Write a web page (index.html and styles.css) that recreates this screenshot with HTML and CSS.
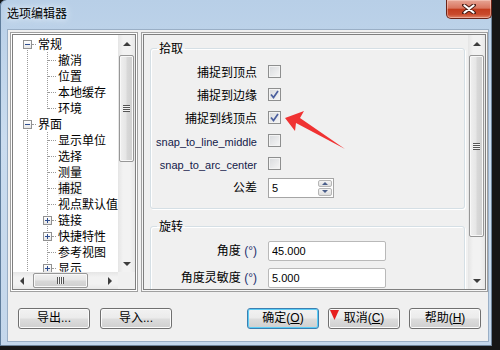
FILE: index.html
```html
<!DOCTYPE html>
<html lang="zh-CN">
<head>
  <meta charset="UTF-8">
  <title>选项编辑器</title>
  <link rel="stylesheet" href="styles.css">
</head>
<body>

<div class="window">
  <div class="titlebar">
    <span class="title">选项编辑器</span>
    <span class="close">
      <svg width="14" height="10" viewBox="0 0 14 10">
        <path d="M2 1 L12 9 M12 1 L2 9" stroke="#4a1c14" stroke-width="4" stroke-linecap="round"/>
        <path d="M2.5 1.5 L11.5 8.5 M11.5 1.5 L2.5 8.5" stroke="#fff" stroke-width="2.2" stroke-linecap="round"/>
      </svg>
    </span>
  </div>

  <div class="client">
    <div class="panes">

      <div class="panel tree-panel">
        <div class="panel-inner tree-grid">
          <div class="tree">
            <div class="row"><span class="node first"><i class="box"></i><i class="dash"></i></span><span class="label">常规</span></div>
            <div class="row"><span class="pipe"></span><span class="node"><i class="dash long"></i></span><span class="label">撤消</span></div>
            <div class="row"><span class="pipe"></span><span class="node"><i class="dash long"></i></span><span class="label">位置</span></div>
            <div class="row"><span class="pipe"></span><span class="node"><i class="dash long"></i></span><span class="label">本地缓存</span></div>
            <div class="row"><span class="pipe"></span><span class="node last"><i class="dash long"></i></span><span class="label">环境</span></div>
            <div class="row"><span class="node"><i class="box"></i><i class="dash"></i></span><span class="label">界面</span></div>
            <div class="row"><span class="pipe"></span><span class="node"><i class="dash long"></i></span><span class="label">显示单位</span></div>
            <div class="row"><span class="pipe"></span><span class="node"><i class="dash long"></i></span><span class="label">选择</span></div>
            <div class="row"><span class="pipe"></span><span class="node"><i class="dash long"></i></span><span class="label">测量</span></div>
            <div class="row"><span class="pipe"></span><span class="node"><i class="dash long"></i></span><span class="label hot">捕捉</span></div>
            <div class="row"><span class="pipe"></span><span class="node"><i class="dash long"></i></span><span class="label">视点默认值</span></div>
            <div class="row"><span class="pipe"></span><span class="node"><i class="box plus"></i><i class="dash"></i></span><span class="label">链接</span></div>
            <div class="row"><span class="pipe"></span><span class="node"><i class="box plus"></i><i class="dash"></i></span><span class="label">快捷特性</span></div>
            <div class="row"><span class="pipe"></span><span class="node"><i class="dash long"></i></span><span class="label">参考视图</span></div>
            <div class="row"><span class="pipe"></span><span class="node"><i class="box plus"></i><i class="dash"></i></span><span class="label">显示</span></div>
          </div>

          <div class="vscroll tree-v">
            <span class="arrow"><i class="tri up"></i></span>
            <span class="thumb"><i class="grip"></i></span>
            <span class="track"></span>
            <span class="arrow"><i class="tri down"></i></span>
          </div>
          <div class="hscroll">
            <span class="arrow"><i class="tri left"></i></span>
            <span class="thumb"><i class="grip"></i></span>
            <span class="track"></span>
            <span class="arrow"><i class="tri right"></i></span>
          </div>
          <div class="corner"></div>
        </div>
      </div>

      <div class="panel opts-panel">
        <div class="panel-inner opts-grid">
          <div class="opts">
            <fieldset class="group">
              <legend>拾取</legend>
              <div class="fields">
                <span class="lbl">捕捉到顶点</span><span class="check"></span>
                <span class="lbl">捕捉到边缘</span><span class="check on"><svg width="11" height="11" viewBox="0 0 11 11"><path d="M2 5.5 L4.5 8.5 L9 2" fill="none" stroke="#4b5f9e" stroke-width="1.7"/></svg></span>
                <span class="lbl">捕捉到线顶点</span><span class="check on"><svg width="11" height="11" viewBox="0 0 11 11"><path d="M2 5.5 L4.5 8.5 L9 2" fill="none" stroke="#4b5f9e" stroke-width="1.7"/></svg></span>
                <span class="lbl latin">snap_to_line_middle</span><span class="check"></span>
                <span class="lbl latin">snap_to_arc_center</span><span class="check"></span>
                <span class="lbl">公差</span>
                <span class="spin">
                  <input class="spin-text" type="text" value="5" readonly>
                  <span class="spin-btns">
                    <span class="spin-btn"><i class="stri up"></i></span>
                    <span class="spin-btn"><i class="stri down"></i></span>
                  </span>
                </span>
              </div>
            </fieldset>

            <fieldset class="group">
              <legend>旋转</legend>
              <div class="fields gap">
                <span class="lbl">角度 <b>(°)</b></span><input class="text" type="text" value="45.000" readonly>
                <span class="lbl">角度灵敏度 <b>(°)</b></span><input class="text" type="text" value="5.000" readonly>
              </div>
            </fieldset>
          </div>

          <div class="vscroll opts-v">
            <span class="arrow"><i class="tri up"></i></span>
            <span class="thumb"><i class="grip"></i></span>
            <span class="track"></span>
            <span class="arrow"><i class="tri down"></i></span>
          </div>
        </div>
      </div>

    </div>

    <div class="buttons">
      <button class="btn">导出...</button>
      <button class="btn">导入...</button>
      <span class="spacer"></span>
      <button class="btn default">确定(<u>O</u>)</button>
      <button class="btn">取消(<u>C</u>)</button>
      <button class="btn">帮助(<u>H</u>)</button>
    </div>
  </div>
</div>

<!-- annotations drawn over the screenshot -->
<svg class="marks" width="500" height="350" viewBox="0 0 500 350">
  <polygon points="285,118 304,111 300,118 345,149 296,123 295,131" fill="#f03232"/>
  <polygon points="330,310 339,310 334.5,320" fill="#e61e1e"/>
</svg>

</body>
</html>
```

FILE: styles.css
```css
body {
  margin: 0;
  width: 500px;
  height: 350px;
  background: #161616;
  font-family: "Liberation Sans", "Noto Sans CJK SC", sans-serif;
  font-size: 12px;
  color: #000;
  overflow: hidden;
}

.window {
  width: 492px;
  height: 346px;
  display: flex;
  flex-direction: column;
  background: linear-gradient(#b8cfe7, #cadcef 40%, #c4d7eb);
  box-shadow: inset 1px 0 0 #5f7d9c, inset -1px -1px 0 #6e849a;
  border-radius: 6px 6px 0 0;
}

.titlebar {
  height: 30px;
  display: flex;
  align-items: flex-start;
}
.title {
  margin: 6px 0 0 7px;
  font-size: 12px;
  line-height: 16px;
  text-shadow: 0 0 5px #e8f1fb, 0 0 8px #e8f1fb;
}
.close {
  margin-left: auto;
  width: 46px;
  height: 19px;
  box-sizing: border-box;
  border: 1px solid #6a2418;
  border-top: none;
  border-radius: 0 0 5px 5px;
  background: linear-gradient(#e7a595, #d9755f 45%, #c33d1f 52%, #c94a2c 80%, #df8468);
  box-shadow: inset 0 0 0 1px rgba(255,220,210,.45);
  display: flex;
  align-items: center;
  justify-content: center;
}

.client {
  flex: 1;
  margin: 0 4px 5px 8px;
  background: #f0f0f0;
  box-shadow: 0 0 0 1px #9aafc6;
  display: flex;
  flex-direction: column;
}

.panes {
  display: flex;
  gap: 3px;
  margin: 2px 0 0 2px;
  height: 260px;
}

.panel {
  border: 1px solid #a0a0a0;
  padding: 1px;
  background: #fff;
}
.panel-inner {
  height: 100%;
  box-sizing: border-box;
  border: 1px solid #7f7f7f;
}
.tree-panel { width: 128px; box-sizing: border-box; }
.opts-panel { width: 347px; box-sizing: border-box; background: #f6f6f6; }

/* tree */
.tree-grid {
  display: grid;
  grid-template-columns: 1fr 17px;
  grid-template-rows: 1fr 17px;
  background: #fff;
}
.tree {
  overflow: hidden;
  padding-top: 1px;
}
.row {
  height: 16px;
  display: flex;
  align-items: center;
  white-space: nowrap;
}
.label {
  margin-left: 1px;
  font-family: "Noto Sans CJK SC", sans-serif;
  font-size: 12px;
  line-height: 16px;
}
.label.hot { background: #f2f2f2; }

.node, .pipe {
  flex: none;
  height: 16px;
  display: flex;
  align-items: center;
  background: repeating-linear-gradient(to bottom, #9a9a9a 0 1px, transparent 1px 2px) 14px 0 / 1px 100% no-repeat;
}
.pipe { width: 20px; }
.node { width: 24px; }
.node.first { background-position: 14px 8px; background-size: 1px 8px; }
.node.last { background-size: 1px 9px; }

.box {
  flex: none;
  margin-left: 10px;
  width: 9px;
  height: 9px;
  box-sizing: border-box;
  border: 1px solid #919191;
  background: linear-gradient(#2e4d8f, #2e4d8f) center / 5px 1px no-repeat, linear-gradient(#fff, #e6e6e6);
}
.box.plus {
  background: linear-gradient(#2e4d8f, #2e4d8f) center / 5px 1px no-repeat,
              linear-gradient(#2e4d8f, #2e4d8f) center / 1px 5px no-repeat,
              linear-gradient(#fff, #e6e6e6);
}
.dash {
  flex: 1;
  height: 0;
  margin-right: 1px;
  border-top: 1px dotted #9a9a9a;
}
.dash.long { margin-left: 15px; }

/* scrollbars */
.vscroll, .hscroll {
  display: flex;
  background: linear-gradient(to right, #e5e5e5, #f2f2f2 30%, #f2f2f2 70%, #e8e8e8);
}
.vscroll { flex-direction: column; }
.hscroll { background: linear-gradient(#e5e5e5, #f2f2f2 30%, #f2f2f2 70%, #e8e8e8); }
.corner { background: #f0f0f0; }
.arrow {
  flex: none;
  width: 17px;
  height: 17px;
  display: flex;
  align-items: center;
  justify-content: center;
}
.hscroll .arrow { height: 17px; }
.track { flex: 1; }
.tri { width: 0; height: 0; border: 4px solid transparent; }
.tri.up { border-bottom-color: #3d3d3d; border-top-width: 0; }
.tri.down { border-top-color: #3d3d3d; border-bottom-width: 0; }
.tri.left { border-right-color: #3d3d3d; border-left-width: 0; }
.tri.right { border-left-color: #3d3d3d; border-right-width: 0; }

.thumb {
  flex: none;
  box-sizing: border-box;
  border: 1px solid #979797;
  border-radius: 2px;
  display: flex;
  align-items: center;
  justify-content: center;
  box-shadow: inset 0 0 0 1px #f8f8f8;
}
.vscroll .thumb {
  margin: 3px 1px 0 1px;
  background: linear-gradient(to right, #f0f0f0, #e6e6e6 45%, #d8d8d8 55%, #cfcfcf);
}
.hscroll .thumb {
  margin: 1px 0 1px 3px;
  width: 55px;
  background: linear-gradient(#f0f0f0, #e6e6e6 45%, #d8d8d8 55%, #cfcfcf);
}
.tree-v .thumb { height: 107px; }
.opts-v .thumb { height: 182px; }

.vscroll .grip {
  width: 7px;
  height: 7px;
  background: repeating-linear-gradient(#555 0 1px, #f4f4f4 1px 2px);
}
.hscroll .grip {
  width: 7px;
  height: 7px;
  background: repeating-linear-gradient(to right, #555 0 1px, #f4f4f4 1px 2px);
}

/* options */
.opts-grid {
  display: flex;
  background: #f0f0f0;
}
.opts {
  flex: 1;
  overflow: hidden;
  padding: 5px 3px 0 6px;
}
.group {
  margin: 0;
  padding: 0 0 9px 0;
  min-width: 0;
  border: 1px solid #d5dfe5;
  border-radius: 3px;
  box-shadow: inset 1px 1px 0 #fff, 1px 1px 0 #fff;
}
.group + .group { margin-top: 9px; }
.group legend {
  margin-left: 6px;
  padding: 0 2px;
  font-family: "Noto Sans CJK SC", sans-serif;
  font-size: 12px;
  line-height: 16px;
}

.fields {
  display: grid;
  grid-template-columns: 106px auto;
  grid-auto-rows: 23px;
  column-gap: 11px;
  align-items: center;
  justify-items: start;
  padding-top: 5px;
}
.fields.gap { row-gap: 4px; }
.lbl {
  justify-self: end;
  white-space: nowrap;
  font-size: 12px;
  line-height: 16px;
}
.lbl b { font-weight: normal; color: #1d2f6e; }
.lbl.latin {
  font-size: 11px;
  color: #14204a;
}

.check {
  width: 13px;
  height: 13px;
  box-sizing: border-box;
  margin-bottom: 2px;
  border: 1px solid #8e8f8f;
  background: linear-gradient(135deg, #d8dadd, #f6f6f6);
  box-shadow: inset 0 0 0 1px #f3f3f3;
  display: flex;
  align-items: center;
  justify-content: center;
}

.spin {
  width: 66px;
  height: 20px;
  box-sizing: border-box;
  border: 1px solid #a5a5a5;
  background: #fff;
  display: flex;
}
.spin-text, .text {
  font-family: "Liberation Sans", sans-serif;
  font-size: 11px;
  color: #000;
  padding: 0 0 0 3px;
  outline: none;
}
.spin-text {
  flex: 1;
  min-width: 0;
  border: none;
  background: transparent;
}
.spin-btns {
  width: 14px;
  display: flex;
  flex-direction: column;
  gap: 1px;
  padding: 1px 1px 1px 0;
}
.spin-btn {
  flex: 1;
  border: 1px solid #b6b6b6;
  border-radius: 2px;
  background: linear-gradient(#f4f4f4, #dedede);
  display: flex;
  align-items: center;
  justify-content: center;
}
.stri { width: 0; height: 0; border: 3px solid transparent; }
.stri.up { border-bottom-color: #4a5e8a; border-top-width: 0; }
.stri.down { border-top-color: #4a5e8a; border-bottom-width: 0; }

.text {
  width: 118px;
  height: 20px;
  box-sizing: border-box;
  border: 1px solid #b9b9b9;
  border-radius: 2px;
  background: #fff;
}

/* buttons */
.buttons {
  display: flex;
  gap: 10px;
  margin: 16px 7px 0 10px;
}
.spacer { flex: 1; }
.btn + .btn + .spacer + .btn,
.spacer ~ .btn { margin-left: -1px; }
.btn {
  width: 72px;
  height: 21px;
  padding: 0;
  font-family: "Liberation Sans", "Noto Sans CJK SC", sans-serif;
  font-size: 12px;
  line-height: 19px;
  color: #000;
  border: 1px solid #707070;
  border-radius: 3px;
  background: linear-gradient(#f2f2f2, #ebebeb 48%, #dddddd 52%, #cfcfcf);
  box-shadow: inset 0 0 0 1px #fbfbfb;
}
.btn u { text-decoration: underline; }
.btn.default {
  border-color: #3c7fb1;
  box-shadow: inset 0 0 0 1px #5ccdf6;
}

.marks {
  position: absolute;
  left: 0;
  top: 0;
  pointer-events: none;
}
```
